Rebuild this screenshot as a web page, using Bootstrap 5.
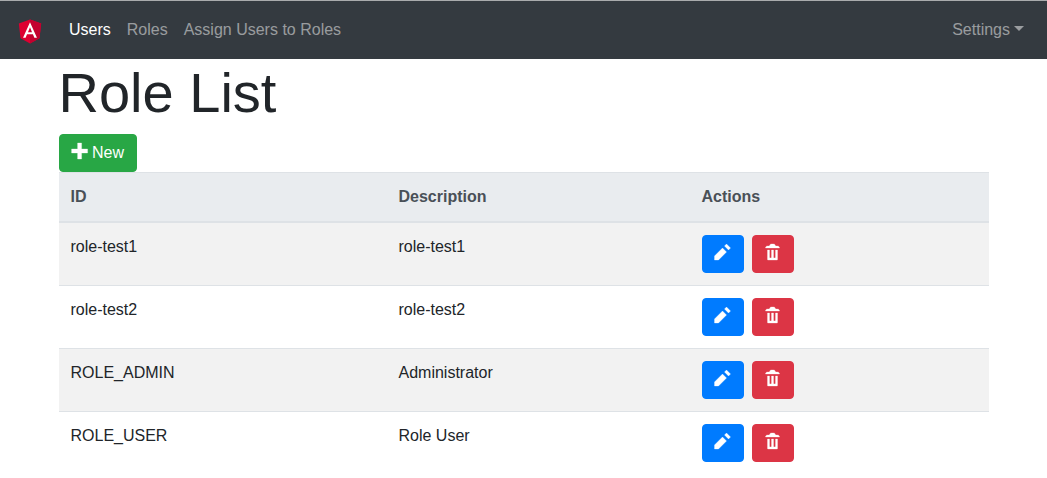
<!DOCTYPE html>
<html lang="en">
<head>
<meta charset="utf-8">
<title>Role List</title>
<meta name="viewport" content="width=device-width, initial-scale=1">
<link href="https://cdn.jsdelivr.net/npm/bootstrap@5.3.0/dist/css/bootstrap.min.css" rel="stylesheet">
<style>
  body { font-family: "Liberation Sans", Arial, sans-serif; color: #212529; overflow: hidden; }
  .topbar { background: #343a40; border-top: 1px solid #a9abad; height: 59px; padding: 8px 15px; }
  .topbar .navbar-brand { margin-right: 16px; padding: 0; line-height: 1; }
  .topbar .nav-link { color: rgba(255,255,255,.5); }
  .topbar .nav-link.active { color: #fff; }
  .topbar .dropdown-toggle::after { margin-left: 4px; border-width: 5px 5px 0; vertical-align: 4px; }
  .page { width: 960px; padding: 0 15px; margin: 0 auto; }
  .page h1 { font-size: 56px; font-weight: 300; line-height: 1.2; margin-bottom: 8px; }
  .btn { border-radius: 4px; }
  .btn-success { --bs-btn-bg: #28a745; --bs-btn-border-color: #28a745; }
  .btn-primary { --bs-btn-bg: #007bff; --bs-btn-border-color: #007bff; }
  .btn-danger { --bs-btn-bg: #dc3545; --bs-btn-border-color: #dc3545; }
  .oi { display: inline-block; width: 16px; height: 16px; fill: currentColor; stroke: currentColor; stroke-width: .15; vertical-align: -1px; overflow: visible; }
  .roles { table-layout: fixed; margin: 0; --bs-table-striped-bg: #f2f2f2; }
  .roles > :not(caption) > * > * { padding: 12px; border-width: 1px 0 0; border-color: #dee2e6; color: #212529; }
  .roles > thead > tr > th { background: #e9ecef; color: #495057; border-bottom-width: 2px; }
  .roles td:last-child { white-space: nowrap; line-height: 0; }
  .roles td .btn { height: 38px; }
  .roles td .btn + .btn { margin-left: 8px; }
</style>
</head>
<body>
<svg class="d-none" xmlns="http://www.w3.org/2000/svg">
  <symbol id="plus" viewBox="0.2 0 8 8" overflow="visible"><path d="M3 0v3h-3v2h3v3h2v-3h3v-2h-3v-3h-2z"/></symbol>
  <symbol id="pencil" viewBox="0.25 0 8 8" overflow="visible"><path d="M6 0l-1 1 2 2 1-1-2-2zm-2 2l-4 4v2h2l4-4-2-2z"/></symbol>
  <symbol id="trash" viewBox="-.25 0 8 8" overflow="visible"><path d="M3 0c-.55 0-1 .45-1 1h-1c-.55 0-1 .45-1 1h7c0-.55-.45-1-1-1h-1c0-.55-.45-1-1-1h-1zm-2 3v4.81c0 .11.08.19.19.19h4.63c.11 0 .19-.08.19-.19v-4.81h-1v3.5c0 .28-.22.5-.5.5s-.5-.22-.5-.5v-3.5h-1v3.5c0 .28-.22.5-.5.5s-.5-.22-.5-.5v-3.5h-1z"/></symbol>
</svg>
<nav class="navbar navbar-expand topbar">
  <a class="navbar-brand" href="#" aria-label="Home">
    <svg class="d-block" width="30" height="30" viewBox="0 -8 250 250" overflow="visible">
      <path fill="#dd0031" d="M125 30 31.900 63.200 46.100 186.300 125 230 203.900 186.300 218.100 63.200z"/>
      <path fill="#c3002f" d="M125 30v200l78.900-43.700 14.200-123.100z"/>
      <path fill="#fff" d="M125 52.100 66.800 182.600h21.700l11.700-29.200h49.400l11.700 29.200H183zm17 83.300h-34l17-40.900z"/>
    </svg>
  </a>
  <div class="navbar-nav me-auto">
    <a class="nav-link active" href="#">Users</a>
    <a class="nav-link" href="#">Roles</a>
    <a class="nav-link" href="#">Assign Users to Roles</a>
  </div>
  <div class="navbar-nav">
    <a class="nav-link dropdown-toggle" href="#">Settings</a>
  </div>
</nav>
<main class="page">
  <h1>Role List</h1>
  <button class="btn btn-success d-block"><svg class="oi"><use href="#plus"/></svg> New</button>
  <table class="table table-striped roles">
    <colgroup><col style="width:328px"><col style="width:303px"><col></colgroup>
    <thead><tr><th>ID</th><th>Description</th><th>Actions</th></tr></thead>
    <tbody>
      <tr><td>role-test1</td><td>role-test1</td><td><button class="btn btn-primary" aria-label="Edit"><svg class="oi"><use href="#pencil"/></svg></button><button class="btn btn-danger" aria-label="Delete"><svg class="oi"><use href="#trash"/></svg></button></td></tr>
      <tr><td>role-test2</td><td>role-test2</td><td><button class="btn btn-primary" aria-label="Edit"><svg class="oi"><use href="#pencil"/></svg></button><button class="btn btn-danger" aria-label="Delete"><svg class="oi"><use href="#trash"/></svg></button></td></tr>
      <tr><td>ROLE_ADMIN</td><td>Administrator</td><td><button class="btn btn-primary" aria-label="Edit"><svg class="oi"><use href="#pencil"/></svg></button><button class="btn btn-danger" aria-label="Delete"><svg class="oi"><use href="#trash"/></svg></button></td></tr>
      <tr><td>ROLE_USER</td><td>Role User</td><td><button class="btn btn-primary" aria-label="Edit"><svg class="oi"><use href="#pencil"/></svg></button><button class="btn btn-danger" aria-label="Delete"><svg class="oi"><use href="#trash"/></svg></button></td></tr>
    </tbody>
  </table>
</main>
<script src="https://cdn.jsdelivr.net/npm/bootstrap@5.3.0/dist/js/bootstrap.bundle.min.js"></script>
</body>
</html>
